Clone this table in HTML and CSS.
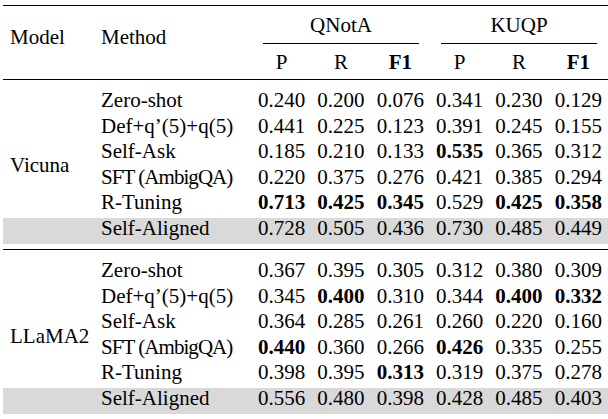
FILE: index.html
```html
<!DOCTYPE html>
<html>
<head>
<meta charset="utf-8">
<link rel="stylesheet" href="styles.css">
</head>
<body>
<table class="results">
  <colgroup>
    <col class="c-model">
    <col class="c-method">
    <col class="c-val"><col class="c-val"><col class="c-val">
    <col class="c-val"><col class="c-val"><col class="c-val">
  </colgroup>
  <thead>
    <tr class="h1">
      <th class="model" rowspan="2">Model</th>
      <th class="method" rowspan="2">Method</th>
      <th class="group" colspan="3"><span class="glabel">QNotA</span><span class="cmid"></span></th>
      <th class="group" colspan="3"><span class="glabel">KUQP</span><span class="cmid"></span></th>
    </tr>
    <tr class="h2">
      <th>P</th><th>R</th><th class="b">F1</th>
      <th>P</th><th>R</th><th class="b">F1</th>
    </tr>
  </thead>
  <tbody class="g1">
    <tr class="gap"><td colspan="8"></td></tr>
    <tr>
      <td class="model name-vicuna" rowspan="5">Vicuna</td>
      <td class="method">Zero-shot</td>
      <td>0.240</td><td>0.200</td><td>0.076</td><td>0.341</td><td>0.230</td><td>0.129</td>
    </tr>
    <tr>
      <td class="method">Def+q’(5)+q(5)</td>
      <td>0.441</td><td>0.225</td><td>0.123</td><td>0.391</td><td>0.245</td><td>0.155</td>
    </tr>
    <tr>
      <td class="method">Self-Ask</td>
      <td>0.185</td><td>0.210</td><td>0.133</td><td class="b">0.535</td><td>0.365</td><td>0.312</td>
    </tr>
    <tr>
      <td class="method tight">SFT (AmbigQA)</td>
      <td>0.220</td><td>0.375</td><td>0.276</td><td>0.421</td><td>0.385</td><td>0.294</td>
    </tr>
    <tr>
      <td class="method">R-Tuning</td>
      <td class="b">0.713</td><td class="b">0.425</td><td class="b">0.345</td><td>0.529</td><td class="b">0.425</td><td class="b">0.358</td>
    </tr>
    <tr class="hl">
      <td class="model"></td>
      <td class="method">Self-Aligned</td>
      <td>0.728</td><td>0.505</td><td>0.436</td><td>0.730</td><td>0.485</td><td>0.449</td>
    </tr>
    <tr class="tail"><td colspan="8"></td></tr>
  </tbody>
  <tbody class="g2">
    <tr class="gap ruled"><td colspan="8"></td></tr>
    <tr>
      <td class="model name-llama" rowspan="5">LLaMA2</td>
      <td class="method">Zero-shot</td>
      <td>0.367</td><td>0.395</td><td>0.305</td><td>0.312</td><td>0.380</td><td>0.309</td>
    </tr>
    <tr>
      <td class="method">Def+q’(5)+q(5)</td>
      <td>0.345</td><td class="b">0.400</td><td>0.310</td><td>0.344</td><td class="b">0.400</td><td class="b">0.332</td>
    </tr>
    <tr>
      <td class="method">Self-Ask</td>
      <td>0.364</td><td>0.285</td><td>0.261</td><td>0.260</td><td>0.220</td><td>0.160</td>
    </tr>
    <tr>
      <td class="method tight">SFT (AmbigQA)</td>
      <td class="b">0.440</td><td>0.360</td><td>0.266</td><td class="b">0.426</td><td>0.335</td><td>0.255</td>
    </tr>
    <tr>
      <td class="method">R-Tuning</td>
      <td>0.398</td><td>0.395</td><td class="b">0.313</td><td>0.319</td><td>0.375</td><td>0.278</td>
    </tr>
    <tr class="hl">
      <td class="model"></td>
      <td class="method">Self-Aligned</td>
      <td>0.556</td><td>0.480</td><td>0.398</td><td>0.428</td><td>0.485</td><td>0.403</td>
    </tr>
  </tbody>
</table>
</body>
</html>
```

FILE: styles.css
```css
* {
  box-sizing: border-box;
}

html, body {
  margin: 0;
  padding: 0;
  background: #ffffff;
}

body {
  font-family: "Liberation Serif", "Times New Roman", serif;
  font-size: 21px;
  color: #000000;
}

.results {
  margin: 5px 0 0 3px;
  width: 605px;
  table-layout: fixed;
  border-collapse: separate;
  border-spacing: 0;
  border-top: 1px solid #000000;
}

.c-model { width: 92px; }
.c-method { width: 157px; }
.c-val { width: 59.33px; }

th, td {
  font-weight: normal;
  line-height: 20px;
  padding: 0 0 5.6px 0;
  text-align: center;
  white-space: nowrap;
  vertical-align: top;
}

.b {
  font-weight: bold;
}

.model {
  text-align: left;
  padding-left: 7px;
}

.method {
  text-align: left;
  padding-left: 6px;
}

.tight {
  letter-spacing: -0.95px;
}

/* header */
thead th.model,
thead th.method {
  vertical-align: middle;
  padding-top: 0;
  padding-bottom: 11px;
  border-bottom: 1px solid #000000;
}

.h1 th.group {
  padding: 9px 0 0 0;
}

.glabel {
  display: block;
  height: 20px;
}

.cmid {
  display: block;
  height: 1px;
  margin: 8px 11px 0;
  background: #000000;
}

.h2 th {
  padding: 8px 0 7px 0;
  border-bottom: 1px solid #000000;
}

/* body */
.gap td {
  height: 10px;
  padding: 0;
  line-height: 0;
  font-size: 0;
}

.gap.ruled td {
  height: 11px;
  border-top: 1px solid #000000;
}

.tail td {
  height: 5.4px;
  padding: 0;
  line-height: 0;
  font-size: 0;
}

td.name-vicuna,
td.name-llama {
  vertical-align: middle;
  padding-bottom: 0;
}

td.name-vicuna { padding-top: 22px; }
td.name-llama { padding-top: 25px; }

.hl td {
  background: #d9d9d9;
}
```
